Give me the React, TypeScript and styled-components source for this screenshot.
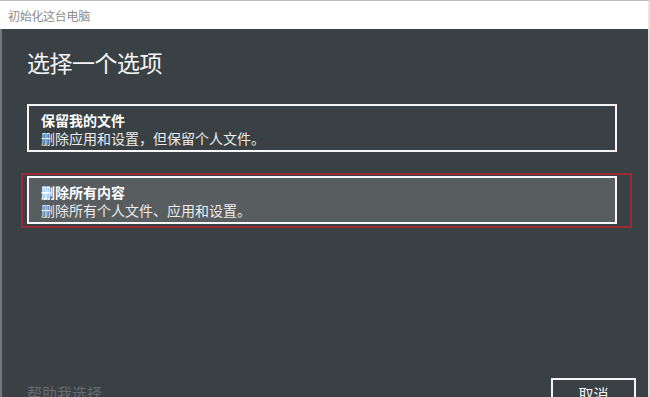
import React from "react";
import styled, { createGlobalStyle } from "styled-components";

const Global = createGlobalStyle`
  html, body {
    margin: 0;
    padding: 0;
    width: 650px;
    height: 397px;
    overflow: hidden;
    background: #3a4145;
  }
  body {
    font-family: "Microsoft YaHei", "Noto Sans CJK SC", "Noto Sans", sans-serif;
  }
`;

const Window = styled.div`
  width: 650px;
  height: 440px;
  display: flex;
  flex-direction: column;
  background: #3a4145;
`;

const TitleBar = styled.div`
  height: 28px;
  border-top: 1px solid #bcbcbc;
  border-right: 2px solid #e6e6e6;
  background: #ffffff;
  display: flex;
  align-items: center;
  padding-left: 8px;
  font-size: 12px;
  color: #8c8c8c;
  letter-spacing: -0.3px;
`;

const Main = styled.div`
  flex: 1;
  display: flex;
  flex-direction: column;
  border-left: 2px solid #72787a;
  border-right: 2px solid #dcdcdc;
  padding: 18px 12px 22px 25px;
`;

const Heading = styled.h1`
  margin: 0;
  font-size: 23px;
  line-height: 30px;
  font-weight: 400;
  color: #f4f4f4;
  letter-spacing: -0.5px;
`;

const Options = styled.div`
  display: flex;
  flex-direction: column;
  gap: 24px;
  margin-top: 27px;
  width: 590px;
`;

const Card = styled.div<{ $selected?: boolean }>`
  position: relative;
  height: 48px;
  box-sizing: border-box;
  border: 2px solid #f6f6f6;
  background: ${(p) => (p.$selected ? "#585d60" : "#3a4145")};
  padding: 5px 12px 3px 12px;
  display: flex;
  flex-direction: column;

  ${(p) =>
    p.$selected &&
    `
    &::after {
      content: "";
      position: absolute;
      left: -8px;
      top: -5px;
      right: -17px;
      bottom: -6px;
      border: 2px solid #9a2a35;
      pointer-events: none;
    }
  `}
`;

const CardTitle = styled.div`
  font-size: 14px;
  line-height: 18px;
  font-weight: 700;
  color: #ffffff;
`;

const CardText = styled.div`
  font-size: 14px;
  line-height: 18px;
  color: #ececec;
`;

const Footer = styled.div`
  margin-top: auto;
  height: 40px;
  display: flex;
  justify-content: space-between;
  align-items: flex-start;
`;

const HelpLink = styled.div`
  margin-top: 5px;
  font-size: 15px;
  line-height: 20px;
  color: #666d70;
`;

const CancelButton = styled.button`
  width: 85px;
  height: 40px;
  box-sizing: border-box;
  border: 2px solid #f4f4f4;
  background: #3a4145;
  color: #f4f4f4;
  font-family: inherit;
  font-size: 15px;
  line-height: 20px;
  padding: 4px 0 0 0;
  display: flex;
  justify-content: center;
  align-items: flex-start;
`;

const options = [
  { title: "保留我的文件", text: "删除应用和设置，但保留个人文件。", selected: false },
  { title: "删除所有内容", text: "删除所有个人文件、应用和设置。", selected: true },
];

export default function App() {
  return (
    <>
      <Global />
      <Window>
        <TitleBar>初始化这台电脑</TitleBar>
        <Main>
          <Heading>选择一个选项</Heading>
          <Options>
            {options.map((o) => (
              <Card key={o.title} $selected={o.selected}>
                <CardTitle>{o.title}</CardTitle>
                <CardText>{o.text}</CardText>
              </Card>
            ))}
          </Options>
          <Footer>
            <HelpLink>帮助我选择</HelpLink>
            <CancelButton>取消</CancelButton>
          </Footer>
        </Main>
      </Window>
    </>
  );
}
